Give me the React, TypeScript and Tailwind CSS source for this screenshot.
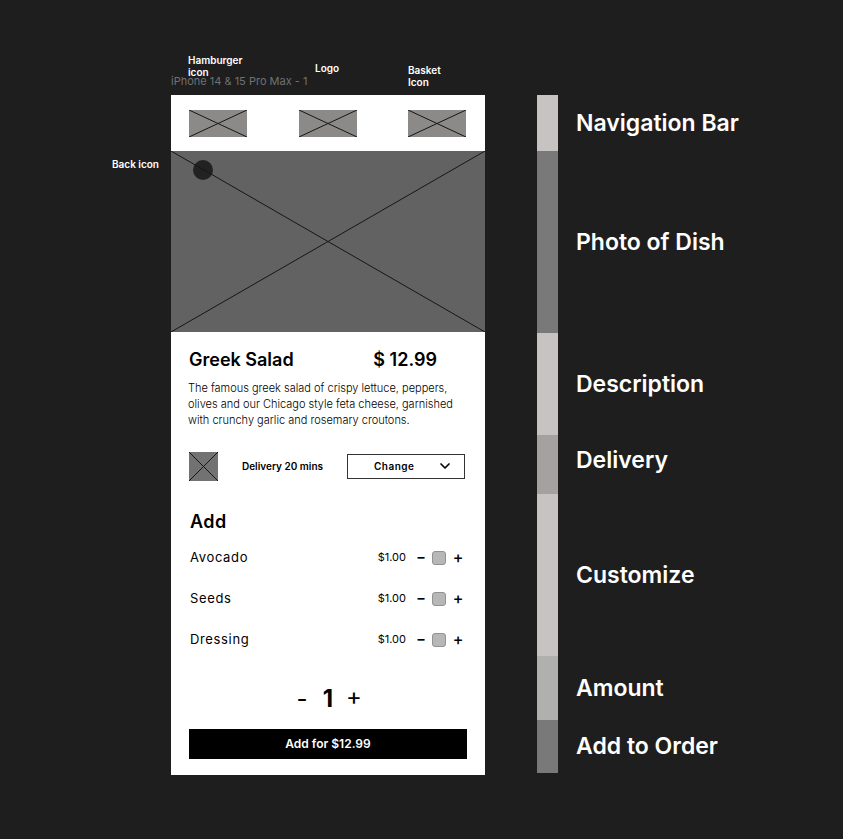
import { useState } from "react";
import { ChevronDown } from "lucide-react";

const sections = [
  { name: "Navigation Bar", size: "h-14", tone: "bg-[#c7c3c2]" },
  { name: "Photo of Dish", size: "h-[182px]", tone: "bg-[#797979]" },
  { name: "Description", size: "h-[102px]", tone: "bg-[#c7c3c2]" },
  { name: "Delivery", size: "h-[59px] pb-2", tone: "bg-[#a5a1a0]" },
  { name: "Customize", size: "h-[162px]", tone: "bg-[#c7c3c2]" },
  { name: "Amount", size: "h-16", tone: "bg-[#b0b0ae]" },
  { name: "Add to Order", size: "h-[53px]", tone: "bg-[#797979]" },
];

const extras = ["Avocado", "Seeds", "Dressing"];

function Placeholder({ className, label }: { className: string; label: string }) {
  return (
    <svg className={className} viewBox="0 0 100 100" preserveAspectRatio="none" role="img" aria-label={label}>
      <path d="M0 0L100 100M0 100L100 0" stroke="#161616" strokeWidth="1" vectorEffect="non-scaling-stroke" />
    </svg>
  );
}

function ExtraRow({ name }: { name: string }) {
  const [count, setCount] = useState("");
  const step = (by: number) => setCount(String(Math.max(0, Number(count) + by)));
  return (
    <li className="flex h-[41px] items-center px-px">
      <span className="flex-1 text-[13px] tracking-wider">{name}</span>
      <span className="text-[11px]">$1.00</span>
      <button type="button" aria-label={`Less ${name}`} onClick={() => step(-1)} className="w-[26px] pb-0.5 pl-1 text-sm leading-4 font-bold">
        –
      </button>
      <input
        aria-label={`${name} quantity`}
        value={count}
        onChange={(e) => setCount(e.target.value)}
        className="size-[14px] rounded-[3px] border border-[#929292] bg-[#b7b7b7] text-center text-[9px] outline-none"
      />
      <button type="button" aria-label={`More ${name}`} onClick={() => step(1)} className="ml-1 w-4 pb-0.5 text-base leading-4 font-medium">
        +
      </button>
    </li>
  );
}

export default function App() {
  const [amount, setAmount] = useState(1);
  return (
    <main className="grid min-h-screen grid-cols-[171fr_314px_358fr] grid-rows-[95px_auto] bg-[#1e1e1e] font-['Inter',sans-serif] text-white">
      <header className="relative col-start-2 grid grid-cols-[127px_93px_60px] pt-[54px] pl-[17px] text-[10px] leading-3 font-semibold">
        <p className="absolute top-[73px] left-0 text-[11px] leading-4 font-normal whitespace-nowrap text-[#717171]">iPhone 14 &amp; 15 Pro Max - 1</p>
        <p className="relative w-14">Hamburger icon</p>
        <p className="pt-2">Logo</p>
        <p className="w-10 pt-[10px]">Basket Icon</p>
      </header>

      <p className="col-start-1 row-start-2 pt-[61px] pr-3 text-right text-[10px] leading-4 font-semibold">Back icon</p>

      <article className="col-start-2 row-start-2 h-fit bg-white pb-4 text-black">
        <nav className="flex h-14 items-center justify-between pr-[19px] pl-[18px]" aria-label="Main">
          <button type="button"><Placeholder label="Hamburger icon" className="h-[27px] w-[58px] bg-[#8b8a88]" /></button>
          <a href="#home"><Placeholder label="Logo" className="h-[27px] w-[58px] bg-[#8b8a88]" /></a>
          <button type="button"><Placeholder label="Basket icon" className="h-[27px] w-[58px] bg-[#8b8a88]" /></button>
        </nav>

        <div className="relative bg-[#626262]">
          <button type="button" aria-label="Back" className="absolute top-[9px] left-[22px] size-5 rounded-full bg-[#222222]" />
          <Placeholder label="Greek salad" className="pointer-events-none relative h-[181px] w-full" />
        </div>

        <section className="px-[18px] pt-4">
          <div className="flex justify-between pr-[30px] text-lg leading-6 font-semibold">
            <h1>Greek Salad</h1>
            <p>$ 12.99</p>
          </div>
          <p className="mt-2 -mr-2 -ml-px text-[11px] leading-4 font-light">
            The famous greek salad of crispy lettuce, peppers,<br />
            olives and our Chicago style feta cheese, garnished<br />
            with crunchy garlic and rosemary croutons.
          </p>
        </section>

        <section className="mt-6 flex items-center justify-between pr-5 pl-[18px]">
          <Placeholder label="Delivery" className="h-[29px] w-[29px] bg-[#727272]" />
          <label htmlFor="delivery" className="text-[10px] font-semibold">Delivery 20 mins</label>
          <div className="relative">
            <select id="delivery" className="block h-[25px] w-[118px] appearance-none border border-[#333333] bg-white pl-[26px] text-[10px] font-semibold tracking-wider">
              <option>Change</option>
            </select>
            <ChevronDown className="pointer-events-none absolute top-1 right-3 size-4" strokeWidth={2.5} />
          </div>
        </section>

        <section className="mt-[29px] px-[18px]">
          <h2 className="pl-px text-lg leading-6 font-semibold tracking-wide">Add</h2>
          <ul className="mt-[3px]">
            {extras.map((name) => <ExtraRow key={name} name={name} />)}
          </ul>
        </section>

        <section className="mt-[23px] flex h-8 items-center justify-center" aria-label="Amount">
          <button type="button" aria-label="Decrease amount" onClick={() => setAmount(Math.max(1, amount - 1))} className="w-6 text-2xl leading-8">-</button>
          <output className="w-7 text-center text-2xl leading-8 font-bold">{amount}</output>
          <button type="button" aria-label="Increase amount" onClick={() => setAmount(amount + 1)} className="w-6 pb-1 text-2xl leading-8">+</button>
        </section>

        <div className="mt-[14px] px-[18px]">
          <button type="button" className="h-[30px] w-full bg-black text-xs font-semibold text-white">Add for $12.99</button>
        </div>
      </article>

      <ol className="col-start-3 row-start-2 pl-[52px]">
        {sections.map((s) => (
          <li key={s.name} className="flex gap-[18px]">
            <span className={`w-[21px] shrink-0 ${s.tone}`} />
            <span className={`flex items-center text-[23px] font-semibold ${s.size}`}>{s.name}</span>
          </li>
        ))}
      </ol>
    </main>
  );
}
